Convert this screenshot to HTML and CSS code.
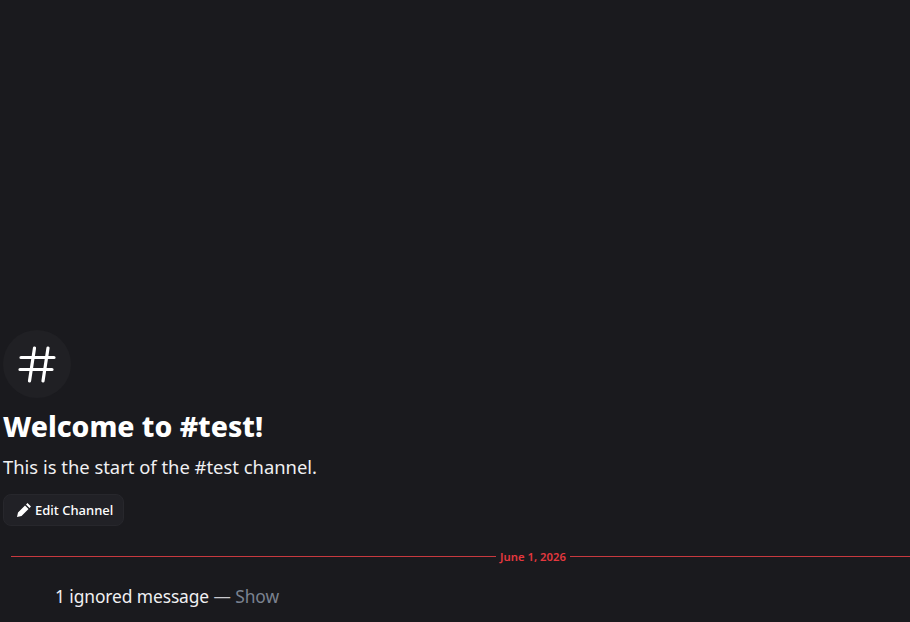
FILE: index.html
```html
<!DOCTYPE html>
<html lang="en">
<head>
    <meta charset="UTF-8">
    <title>#test</title>
    <link rel="stylesheet" href="styles.css">
</head>
<body>
    <main class="chat">
        <!-- Channel welcome -->
        <section class="welcome">
            <div class="channel-icon">
                <svg width="42" height="42" viewBox="0 0 42 42" fill="none" stroke="#fff" stroke-width="3.200" stroke-linecap="round">
                    <path d="M5 14.500H38M4 26.500H36M18.500 5L13.500 38M32 5L27 38"/>
                </svg>
            </div>
            <h1>Welcome to #test!</h1>
            <p class="intro">This is the start of the #test channel.</p>
            <button class="edit-btn">
                <svg width="16" height="16" viewBox="0 0 16 16" fill="#fff">
                    <path d="M11.500 1L15 4.500L13.500 6L10 2.500ZM9 3.500L12.500 7L5.500 14L1 15L2 10.500Z"/>
                </svg>
                Edit Channel
            </button>
        </section>

        <!-- Date divider -->
        <div class="divider">
            <span class="line line-left"></span>
            <span>June 1, 2026</span>
            <span class="line"></span>
        </div>

        <div class="ignored">1 ignored message <span class="dash">—</span> <a href="#">Show</a></div>
    </main>
</body>
</html>
```

FILE: styles.css
```css
body {
    background-color: #1a1a1e;
    color: #fff;
    font-family: "Noto Sans", sans-serif;
    margin: 0;
    overflow: hidden;
}

.chat {
    height: 622px;
    display: flex;
    flex-direction: column;
    justify-content: flex-end;
}

.welcome {
    padding-left: 3px;
}

.channel-icon {
    width: 68px;
    height: 68px;
    border-radius: 50%;
    background-color: #202024;
    display: flex;
    align-items: center;
    justify-content: center;
}

h1 {
    font-size: 28.3px;
    line-height: 36px;
    font-weight: 800;
    margin: 10px 0 0;
}

.intro {
    font-size: 18.4px;
    line-height: 24px;
    color: #f0f0f2;
    margin: 11px 0 0;
}

.edit-btn {
    display: flex;
    align-items: center;
    gap: 3px;
    height: 32px;
    margin-top: 15px;
    padding: 0 10px 0 12px;
    background-color: #212126;
    border: 1px solid #27272c;
    border-radius: 8px;
    color: #fff;
    font-family: inherit;
    font-size: 13px;
    font-weight: 500;
}

.divider {
    display: flex;
    align-items: center;
    gap: 4px;
    margin: 22px 0 0 11px;
    height: 16px;
    color: #e5383f;
    font-size: 11.3px;
    font-weight: 600;
}

.line {
    flex: 1;
    height: 1px;
    background-color: #c8393f;
}

.line-left {
    flex: 0 0 485px;
}

.ignored {
    font-size: 17.4px;
    line-height: 24px;
    color: #f0f0f2;
    letter-spacing: -0.1px;
    margin: 20px 0 14px 55px;
}

.dash {
    color: #c9c9ce;
}

.ignored a {
    color: #7a8290;
    text-decoration: none;
}
```
